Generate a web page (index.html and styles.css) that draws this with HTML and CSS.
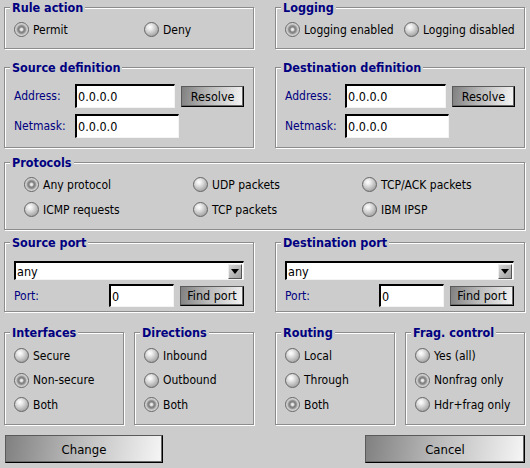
FILE: index.html
```html
<!DOCTYPE html>
<html>
<head>
<meta charset="utf-8">
<link rel="stylesheet" href="styles.css">
</head>
<body>
<div class="dlg">
  <div class="row r1">
    <fieldset class="box half">
      <legend>Rule action</legend>
      <div class="inner radios cols-rule">
        <label class="rb"><span class="dot on"></span>Permit</label>
        <label class="rb"><span class="dot"></span>Deny</label>
      </div>
    </fieldset>
    <fieldset class="box half">
      <legend>Logging</legend>
      <div class="inner radios cols-log">
        <label class="rb"><span class="dot on"></span>Logging enabled</label>
        <label class="rb"><span class="dot"></span>Logging disabled</label>
      </div>
    </fieldset>
  </div>

  <div class="row r2">
    <fieldset class="box half">
      <legend>Source definition</legend>
      <div class="inner defs">
        <div class="frow">
          <span class="lbl">Address:</span>
          <span class="field">0.0.0.0</span>
          <span class="btn resolve">Resolve</span>
        </div>
        <div class="frow">
          <span class="lbl">Netmask:</span>
          <span class="field">0.0.0.0</span>
        </div>
      </div>
    </fieldset>
    <fieldset class="box half">
      <legend>Destination definition</legend>
      <div class="inner defs right">
        <div class="frow">
          <span class="lbl">Address:</span>
          <span class="field">0.0.0.0</span>
          <span class="btn resolve">Resolve</span>
        </div>
        <div class="frow">
          <span class="lbl">Netmask:</span>
          <span class="field">0.0.0.0</span>
        </div>
      </div>
    </fieldset>
  </div>

  <div class="row r3">
    <fieldset class="box full">
      <legend>Protocols</legend>
      <div class="inner radios cols-proto">
        <label class="rb"><span class="dot on"></span>Any protocol</label>
        <label class="rb"><span class="dot"></span>UDP packets</label>
        <label class="rb"><span class="dot"></span>TCP/ACK packets</label>
        <label class="rb"><span class="dot"></span>ICMP requests</label>
        <label class="rb"><span class="dot"></span>TCP packets</label>
        <label class="rb"><span class="dot"></span>IBM IPSP</label>
      </div>
    </fieldset>
  </div>

  <div class="row r4">
    <fieldset class="box half">
      <legend>Source port</legend>
      <div class="inner ports">
        <div class="select"><span class="sel-text">any</span><span class="drop"><span class="tri"></span></span></div>
        <div class="prow">
          <span class="lbl grow">Port:</span>
          <span class="field port">0</span>
          <span class="btn find">Find port</span>
        </div>
      </div>
    </fieldset>
    <fieldset class="box half">
      <legend>Destination port</legend>
      <div class="inner ports pr10">
        <div class="select"><span class="sel-text">any</span><span class="drop"><span class="tri"></span></span></div>
        <div class="prow">
          <span class="lbl grow">Port:</span>
          <span class="field port">0</span>
          <span class="btn find">Find port</span>
        </div>
      </div>
    </fieldset>
  </div>

  <div class="row r5">
    <fieldset class="box quarter">
      <legend>Interfaces</legend>
      <div class="inner radios stack">
        <label class="rb"><span class="dot"></span>Secure</label>
        <label class="rb"><span class="dot on"></span>Non-secure</label>
        <label class="rb"><span class="dot"></span>Both</label>
      </div>
    </fieldset>
    <fieldset class="box quarter">
      <legend>Directions</legend>
      <div class="inner radios stack">
        <label class="rb"><span class="dot"></span>Inbound</label>
        <label class="rb"><span class="dot"></span>Outbound</label>
        <label class="rb"><span class="dot on"></span>Both</label>
      </div>
    </fieldset>
    <fieldset class="box quarter gap-big">
      <legend>Routing</legend>
      <div class="inner radios stack">
        <label class="rb"><span class="dot"></span>Local</label>
        <label class="rb"><span class="dot"></span>Through</label>
        <label class="rb"><span class="dot on"></span>Both</label>
      </div>
    </fieldset>
    <fieldset class="box quarter">
      <legend>Frag. control</legend>
      <div class="inner radios stack">
        <label class="rb"><span class="dot"></span>Yes (all)</label>
        <label class="rb"><span class="dot on"></span>Nonfrag only</label>
        <label class="rb"><span class="dot"></span>Hdr+frag only</label>
      </div>
    </fieldset>
  </div>

  <div class="row buttons">
    <span class="btn big">Change</span>
    <span class="btn big">Cancel</span>
  </div>
</div>
</body>
</html>
```

FILE: styles.css
```css
html, body {
  margin: 0;
  padding: 0;
  background: #cccccc;
}
body {
  width: 530px;
  height: 468px;
  overflow: hidden;
  font-family: "DejaVu Sans Condensed", "DejaVu Sans", sans-serif;
  font-size: 12px;
  color: #000;
}
.dlg {
  padding-left: 4px;
  width: 521px;
  display: flex;
  flex-direction: column;
}
.row {
  display: flex;
  gap: 21px;
}
.r1 { height: 49px; }
.r2 { margin-top: 11px; height: 88px; }
.r3 { margin-top: 7px; height: 75px; }
.r4 { margin-top: 5px; height: 77px; }
.r5 { margin-top: 13px; height: 100px; gap: 10px; }
.r5 .gap-big { margin-left: 11px; }
.buttons {
  margin-top: 10px;
  padding-left: 1px;
  justify-content: space-between;
}

.box {
  margin: 0;
  padding: 0;
  min-width: 0;
  box-sizing: border-box;
  height: 100%;
  border: 1px solid #8c8c8c;
  box-shadow: inset 1px 1px 0 #ffffff, 1px 1px 0 #ffffff;
}
.half { width: 250px; }
.full { width: 521px; }
.quarter { width: 120px; }

legend {
  margin-left: 5px;
  padding: 0 2px;
  background: #cccccc;
  font-weight: bold;
  font-size: 12.5px;
  line-height: 15px;
  color: #000080;
}

.inner { padding-left: 9px; padding-right: 9px; }
.pr10 { padding-right: 10px; }

.radios { display: grid; }
.cols-rule { grid-template-columns: 130px 1fr; padding-top: 7px; }
.cols-log { grid-template-columns: 119px 1fr; padding-top: 7px; }
.cols-proto {
  grid-template-columns: 169px 169px 1fr;
  padding-left: 19px;
  padding-top: 7px;
  row-gap: 10px;
}
.stack { padding-top: 8px; row-gap: 9.5px; }

.rb {
  display: flex;
  align-items: center;
  height: 15px;
  white-space: nowrap;
}
.dot {
  flex: none;
  width: 15px;
  height: 15px;
  box-sizing: border-box;
  border-radius: 50%;
  border: 1px solid #666666;
  margin-right: 4px;
  background: radial-gradient(circle at 38% 32%, #ffffff 0, #ececec 20%, #bcbcbc 58%, #8a8a8a 100%);
}
.dot.on {
  background: radial-gradient(circle at 50% 50%, #f2f2f2 0, #dedede 14%, #7c7c7c 28%, #8e8e8e 42%, #c4c4c4 56%, #ededed 80%, #cfcfcf 100%);
}

.defs { padding-top: 9px; display: flex; flex-direction: column; gap: 6px; }
.defs.right { padding-left: 9px; }
.frow { display: flex; align-items: center; height: 24px; }
.lbl { color: #000080; width: 61px; flex: none; }
.defs.right .lbl { width: 60px; }

.field {
  box-sizing: border-box;
  width: 104px;
  height: 24px;
  background: #ffffff;
  border-style: solid;
  border-width: 2px 1px 1px 2px;
  border-color: #000 #f4f4f4 #f4f4f4 #000;
  padding-left: 1px;
  display: flex;
  align-items: center;
  font-size: 12.5px;
}

.btn {
  box-sizing: border-box;
  display: flex;
  align-items: center;
  justify-content: center;
  border: 1px solid #5a5a5a;
  border-right-color: #000;
  border-bottom-color: #000;
  box-shadow: inset -1px -1px 0 #6a6a6a;
  background: linear-gradient(100deg, #808080 0%, #bababa 45%, #f6f6f6 100%);
  font-size: 12.5px;
  color: #000;
}
.resolve { width: 65px; height: 21px; margin-left: 6px; }
.find { width: 64px; height: 20px; margin-left: 6px; }
.big { width: 158px; height: 28px; font-size: 13px; }
.big + .big { width: 160px; }

.ports { padding-top: 11px; display: flex; flex-direction: column; gap: 4px; }
.select {
  box-sizing: border-box;
  height: 19px;
  background: #ffffff;
  border-style: solid;
  border-width: 2px 1px 1px 2px;
  border-color: #000 #f4f4f4 #f4f4f4 #000;
  display: flex;
  align-items: center;
  font-size: 12.5px;
}
.sel-text { flex: 1; padding-left: 1px; }
.drop {
  box-sizing: border-box;
  width: 14px;
  height: 15px;
  margin-right: 1px;
  background: linear-gradient(135deg, #d6d6d6, #a0a0a0);
  border: 1px solid;
  border-color: #eeeeee #555555 #555555 #eeeeee;
  display: flex;
  align-items: center;
  justify-content: center;
}
.tri {
  width: 0;
  height: 0;
  border-left: 4px solid transparent;
  border-right: 4px solid transparent;
  border-top: 5px solid #000;
}
.prow { display: flex; align-items: center; height: 23px; }
.grow { flex: 1; width: auto; }
.port { width: 65px; height: 23px; }
```
